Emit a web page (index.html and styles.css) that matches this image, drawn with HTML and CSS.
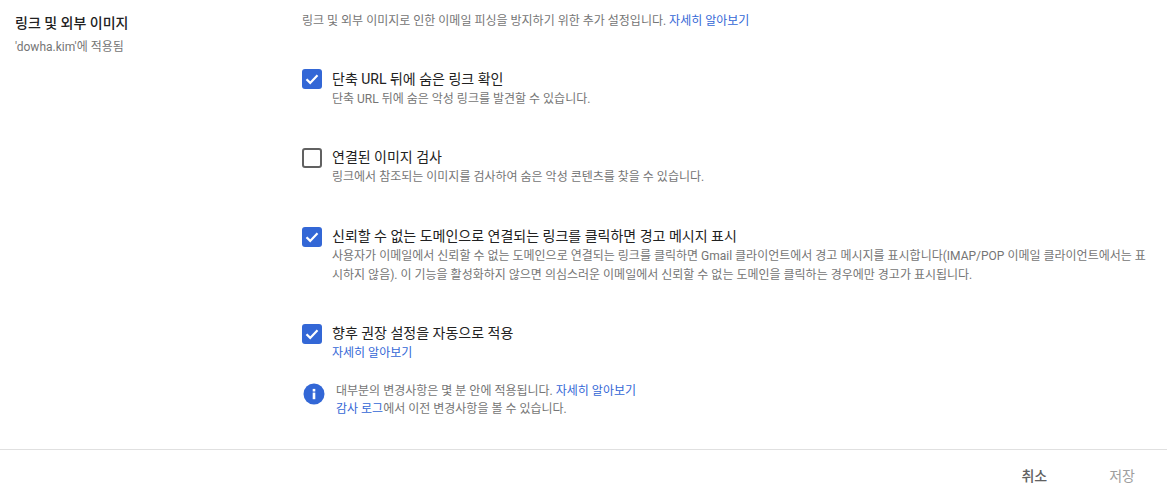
FILE: index.html
```html
<!DOCTYPE html>
<html lang="ko">
<head>
    <meta charset="UTF-8">
    <title>링크 및 외부 이미지</title>
    <link rel="stylesheet" href="styles.css">
</head>
<body>
    <div class="section">
        <div class="side">
            <div class="side-title">링크 및 외부 이미지</div>
            <div class="side-sub">'dowha.kim'에 적용됨</div>
        </div>
        <div class="main">
            <div class="intro">링크 및 외부 이미지로 인한 이메일 피싱을 방지하기 위한 추가 설정입니다. <a href="#">자세히 알아보기</a></div>

            <div class="option">
                <span class="box checked"><svg viewBox="0 0 20 20"><path d="M4.5 10.2l3.7 3.7 7.3-7.6" /></svg></span>
                <div class="option-text">
                    <div class="option-title">단축 URL 뒤에 숨은 링크 확인</div>
                    <div class="option-desc">단축 URL 뒤에 숨은 악성 링크를 발견할 수 있습니다.</div>
                </div>
            </div>

            <div class="option">
                <span class="box"></span>
                <div class="option-text">
                    <div class="option-title">연결된 이미지 검사</div>
                    <div class="option-desc">링크에서 참조되는 이미지를 검사하여 숨은 악성 콘텐츠를 찾을 수 있습니다.</div>
                </div>
            </div>

            <div class="option">
                <span class="box checked"><svg viewBox="0 0 20 20"><path d="M4.5 10.2l3.7 3.7 7.3-7.6" /></svg></span>
                <div class="option-text">
                    <div class="option-title">신뢰할 수 없는 도메인으로 연결되는 링크를 클릭하면 경고 메시지 표시</div>
                    <div class="option-desc">사용자가 이메일에서 신뢰할 수 없는 도메인으로 연결되는 링크를 클릭하면 Gmail 클라이언트에서 경고 메시지를 표시합니다(IMAP/POP 이메일 클라이언트에서는 표시하지 않음). 이 기능을 활성화하지 않으면 의심스러운 이메일에서 신뢰할 수 없는 도메인을 클릭하는 경우에만 경고가 표시됩니다.</div>
                </div>
            </div>

            <div class="option last">
                <span class="box checked"><svg viewBox="0 0 20 20"><path d="M4.5 10.2l3.7 3.7 7.3-7.6" /></svg></span>
                <div class="option-text">
                    <div class="option-title">향후 권장 설정을 자동으로 적용</div>
                    <div class="option-desc"><a href="#">자세히 알아보기</a></div>
                </div>
            </div>

            <div class="notice">
                <svg class="info" viewBox="0 0 22 22"><circle cx="11" cy="11" r="10.5" fill="#3367d6" /><rect x="9.7" y="9.6" width="2.6" height="6.6" fill="#fff" /><rect x="9.7" y="5.9" width="2.6" height="2.6" fill="#fff" /></svg>
                <div class="notice-text">
                    <div>대부분의 변경사항은 몇 분 안에 적용됩니다. <a href="#">자세히 알아보기</a></div>
                    <div><a href="#">감사 로그</a>에서 이전 변경사항을 볼 수 있습니다.</div>
                </div>
            </div>
        </div>
    </div>

    <div class="footer">
        <span class="btn cancel">취소</span>
        <span class="btn save">저장</span>
    </div>
</body>
</html>
```

FILE: styles.css
```css
html, body {
    margin: 0;
    height: 499px;
    overflow: hidden;
}
body {
    font-family: Roboto, "Noto Sans CJK KR", sans-serif;
    background-color: #fff;
    color: #212121;
    font-size: 12px;
}
a {
    color: #3367d6;
    text-decoration: none;
}
.section {
    display: flex;
    height: 450px;
    box-sizing: border-box;
    border-bottom: 1px solid #e0e0e0;
}
.side {
    width: 302px;
    flex: none;
    padding: 14px 0 0 15px;
    box-sizing: border-box;
}
.side-title {
    font-size: 14px;
    font-weight: 500;
    line-height: 18px;
}
.side-sub {
    margin-top: 7px;
    line-height: 16px;
    color: #757575;
}
.main {
    flex: 1;
    padding: 13px 0 0 0;
    min-width: 0;
}
.intro {
    line-height: 16px;
    color: #757575;
}
.option {
    display: flex;
    margin-top: 39px;
    padding-right: 20px;
}
.intro + .option {
    margin-top: 40px;
}
.intro + .option + .option {
    margin-top: 38px;
}
.option.last {
    margin-top: 38px;
}
.box {
    width: 20px;
    height: 20px;
    flex: none;
    box-sizing: border-box;
    border: 2px solid #616161;
    border-radius: 3px;
    margin-right: 10px;
}
.option + .option .box {
    margin-top: 1px;
}
.box.checked {
    background-color: #3367d6;
    border: none;
}
.box svg {
    display: block;
    width: 20px;
    height: 20px;
    fill: none;
    stroke: #fff;
    stroke-width: 2.2;
}
.option-title {
    font-size: 14px;
    line-height: 21px;
    color: #212121;
}
.option-desc {
    line-height: 19px;
    color: #757575;
}
.notice {
    display: flex;
    margin-top: 19px;
}
.info {
    width: 22px;
    height: 22px;
    flex: none;
    margin: 1px 11px 0 1px;
}
.notice-text {
    line-height: 18px;
    color: #757575;
}
.footer {
    display: flex;
    justify-content: flex-end;
    align-items: center;
    height: 49px;
    padding-right: 32px;
    gap: 62px;
}
.btn {
    font-size: 14px;
    font-weight: 500;
}
.cancel {
    color: #616161;
}
.save {
    color: #9e9e9e;
    font-weight: 400;
}
```
